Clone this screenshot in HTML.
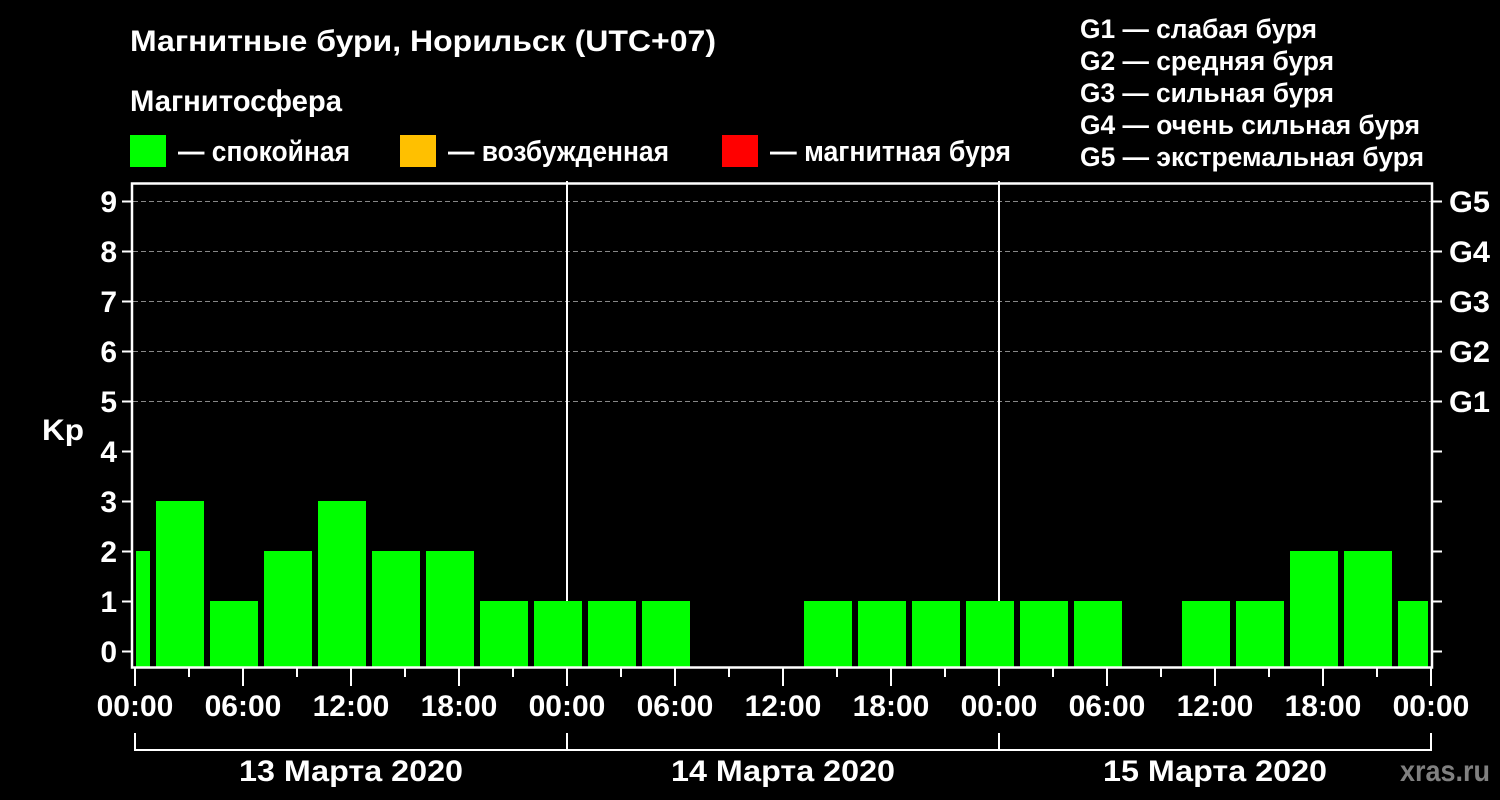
<!DOCTYPE html>
<html><head><meta charset="utf-8"><style>html,body{margin:0;padding:0;background:#000}svg{display:block}</style></head>
<body>
<svg width="1500" height="800" viewBox="0 0 1500 800" xmlns="http://www.w3.org/2000/svg" font-family="Liberation Sans, Arial, sans-serif" font-weight="bold" fill="#fff">
<rect width="1500" height="800" fill="#000"/>
<text x="130" y="51" font-size="30" textLength="586" lengthAdjust="spacingAndGlyphs">Магнитные бури, Норильск (UTC+07)</text>
<text x="130" y="111" font-size="30" textLength="212" lengthAdjust="spacingAndGlyphs">Магнитосфера</text>
<rect x="130" y="135" width="36" height="32" fill="#00ff00"/>
<text x="178" y="161" font-size="29" textLength="172" lengthAdjust="spacingAndGlyphs">— спокойная</text>
<rect x="400" y="135" width="36" height="32" fill="#ffc000"/>
<text x="448" y="161" font-size="29" textLength="221" lengthAdjust="spacingAndGlyphs">— возбужденная</text>
<rect x="722" y="135" width="36" height="32" fill="#ff0000"/>
<text x="770" y="161" font-size="29" textLength="241" lengthAdjust="spacingAndGlyphs">— магнитная буря</text>
<g font-size="27">
<text x="1080" y="38" textLength="237" lengthAdjust="spacingAndGlyphs">G1 — слабая буря</text>
<text x="1080" y="70" textLength="254" lengthAdjust="spacingAndGlyphs">G2 — средняя буря</text>
<text x="1080" y="102" textLength="254" lengthAdjust="spacingAndGlyphs">G3 — сильная буря</text>
<text x="1080" y="134" textLength="340" lengthAdjust="spacingAndGlyphs">G4 — очень сильная буря</text>
<text x="1080" y="166" textLength="344" lengthAdjust="spacingAndGlyphs">G5 — экстремальная буря</text>
</g>
<g stroke="#888" stroke-width="1" stroke-dasharray="5,3">
<line x1="133" y1="201.5" x2="1431" y2="201.5"/>
<line x1="133" y1="251.5" x2="1431" y2="251.5"/>
<line x1="133" y1="301.5" x2="1431" y2="301.5"/>
<line x1="133" y1="351.5" x2="1431" y2="351.5"/>
<line x1="133" y1="401.5" x2="1431" y2="401.5"/>
</g>
<g fill="#00ff00">
<rect x="136" y="551" width="14" height="116"/>
<rect x="156" y="501" width="48" height="166"/>
<rect x="210" y="601" width="48" height="66"/>
<rect x="264" y="551" width="48" height="116"/>
<rect x="318" y="501" width="48" height="166"/>
<rect x="372" y="551" width="48" height="116"/>
<rect x="426" y="551" width="48" height="116"/>
<rect x="480" y="601" width="48" height="66"/>
<rect x="534" y="601" width="48" height="66"/>
<rect x="588" y="601" width="48" height="66"/>
<rect x="642" y="601" width="48" height="66"/>
<rect x="804" y="601" width="48" height="66"/>
<rect x="858" y="601" width="48" height="66"/>
<rect x="912" y="601" width="48" height="66"/>
<rect x="966" y="601" width="48" height="66"/>
<rect x="1020" y="601" width="48" height="66"/>
<rect x="1074" y="601" width="48" height="66"/>
<rect x="1182" y="601" width="48" height="66"/>
<rect x="1236" y="601" width="48" height="66"/>
<rect x="1290" y="551" width="48" height="116"/>
<rect x="1344" y="551" width="48" height="116"/>
<rect x="1398" y="601" width="30" height="66"/>
</g>
<g stroke="#fff" stroke-width="2">
<line x1="567" y1="181" x2="567" y2="601"/>
<line x1="999" y1="181" x2="999" y2="601"/>
</g>
<rect x="132" y="183.5" width="1300" height="484" fill="none" stroke="#fff" stroke-width="2.5"/>
<g stroke="#fff" stroke-width="2">
<line x1="122" y1="201.5" x2="132" y2="201.5"/><line x1="122" y1="251.5" x2="132" y2="251.5"/>
<line x1="122" y1="301.5" x2="132" y2="301.5"/><line x1="122" y1="351.5" x2="132" y2="351.5"/>
<line x1="122" y1="401.5" x2="132" y2="401.5"/><line x1="122" y1="451.5" x2="132" y2="451.5"/>
<line x1="122" y1="501.5" x2="132" y2="501.5"/><line x1="122" y1="551.5" x2="132" y2="551.5"/>
<line x1="122" y1="601.5" x2="132" y2="601.5"/><line x1="122" y1="651.5" x2="132" y2="651.5"/>
<line x1="1432" y1="201.5" x2="1442" y2="201.5"/><line x1="1432" y1="251.5" x2="1442" y2="251.5"/>
<line x1="1432" y1="301.5" x2="1442" y2="301.5"/><line x1="1432" y1="351.5" x2="1442" y2="351.5"/>
<line x1="1432" y1="401.5" x2="1442" y2="401.5"/><line x1="1432" y1="451.5" x2="1442" y2="451.5"/>
<line x1="1432" y1="501.5" x2="1442" y2="501.5"/><line x1="1432" y1="551.5" x2="1442" y2="551.5"/>
<line x1="1432" y1="601.5" x2="1442" y2="601.5"/><line x1="1432" y1="651.5" x2="1442" y2="651.5"/>
</g>
<g font-size="30" text-anchor="end">
<text x="117" y="212">9</text><text x="117" y="262">8</text><text x="117" y="312">7</text>
<text x="117" y="362">6</text><text x="117" y="412">5</text><text x="117" y="462">4</text>
<text x="117" y="512">3</text><text x="117" y="562">2</text><text x="117" y="612">1</text>
<text x="117" y="662">0</text>
</g>
<text x="42" y="440" font-size="30" textLength="42" lengthAdjust="spacingAndGlyphs">Kp</text>
<g font-size="30">
<text x="1449" y="212" textLength="41" lengthAdjust="spacingAndGlyphs">G5</text><text x="1449" y="262" textLength="41" lengthAdjust="spacingAndGlyphs">G4</text><text x="1449" y="312" textLength="41" lengthAdjust="spacingAndGlyphs">G3</text>
<text x="1449" y="362" textLength="41" lengthAdjust="spacingAndGlyphs">G2</text><text x="1449" y="412" textLength="41" lengthAdjust="spacingAndGlyphs">G1</text>
</g>
<g stroke="#fff" stroke-width="2">
<line x1="135" y1="668" x2="135" y2="686"/><line x1="189" y1="668" x2="189" y2="677"/>
<line x1="243" y1="668" x2="243" y2="686"/><line x1="297" y1="668" x2="297" y2="677"/>
<line x1="351" y1="668" x2="351" y2="686"/><line x1="405" y1="668" x2="405" y2="677"/>
<line x1="459" y1="668" x2="459" y2="686"/><line x1="513" y1="668" x2="513" y2="677"/>
<line x1="567" y1="668" x2="567" y2="686"/><line x1="621" y1="668" x2="621" y2="677"/>
<line x1="675" y1="668" x2="675" y2="686"/><line x1="729" y1="668" x2="729" y2="677"/>
<line x1="783" y1="668" x2="783" y2="686"/><line x1="837" y1="668" x2="837" y2="677"/>
<line x1="891" y1="668" x2="891" y2="686"/><line x1="945" y1="668" x2="945" y2="677"/>
<line x1="999" y1="668" x2="999" y2="686"/><line x1="1053" y1="668" x2="1053" y2="677"/>
<line x1="1107" y1="668" x2="1107" y2="686"/><line x1="1161" y1="668" x2="1161" y2="677"/>
<line x1="1215" y1="668" x2="1215" y2="686"/><line x1="1269" y1="668" x2="1269" y2="677"/>
<line x1="1323" y1="668" x2="1323" y2="686"/><line x1="1377" y1="668" x2="1377" y2="677"/>
<line x1="1431" y1="668" x2="1431" y2="686"/>
<polyline fill="none" points="135,733 135,750 1431,750 1431,733"/>
<line x1="567" y1="733" x2="567" y2="750"/><line x1="999" y1="733" x2="999" y2="750"/>
</g>
<g font-size="30" text-anchor="middle">
<text x="135" y="716">00:00</text><text x="243" y="716">06:00</text><text x="351" y="716">12:00</text>
<text x="459" y="716">18:00</text><text x="567" y="716">00:00</text><text x="675" y="716">06:00</text>
<text x="783" y="716">12:00</text><text x="891" y="716">18:00</text><text x="999" y="716">00:00</text>
<text x="1107" y="716">06:00</text><text x="1215" y="716">12:00</text><text x="1323" y="716">18:00</text>
<text x="1431" y="716">00:00</text>
<text x="351" y="781" textLength="224" lengthAdjust="spacingAndGlyphs">13 Марта 2020</text>
<text x="783" y="781" textLength="224" lengthAdjust="spacingAndGlyphs">14 Марта 2020</text>
<text x="1215" y="781" textLength="224" lengthAdjust="spacingAndGlyphs">15 Марта 2020</text>
</g>
<text x="1400" y="781" font-size="30" fill="#808080" textLength="90" lengthAdjust="spacingAndGlyphs">xras.ru</text>
</svg>
</body></html>
